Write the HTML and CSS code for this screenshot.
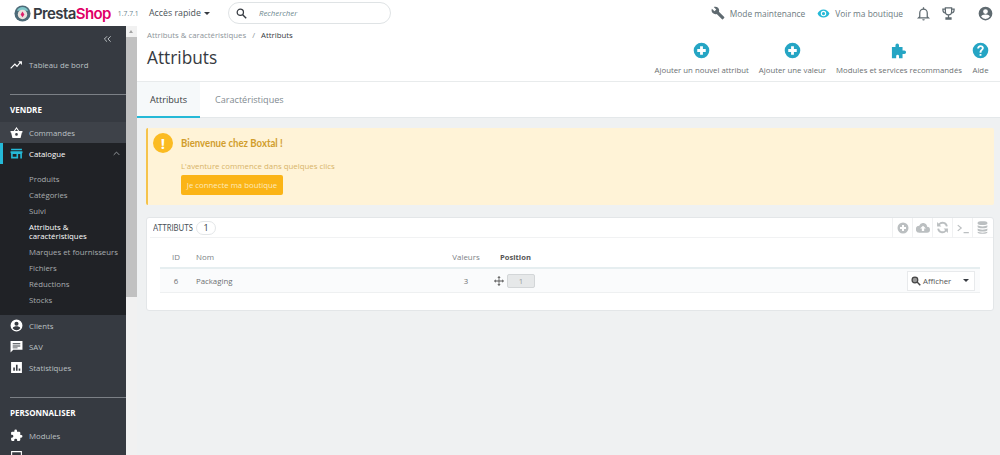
FILE: index.html
```html
<!DOCTYPE html>
<html lang="fr">
<head>
<meta charset="utf-8">
<title>Attributs</title>
<link rel="stylesheet" href="styles.css">
</head>
<body>
<header class="topbar">
  <div class="logo">
    <svg class="logo-mark" viewBox="0 0 18 18" width="17" height="17"><circle cx="9" cy="9" r="8.500" fill="#4d6a78"/><path d="M3 6a6.500 6.500 0 0 1 12 0z" fill="#7fc6c9"/><circle cx="9" cy="10" r="5" fill="#e9e2dc"/><path d="M9 7l2 3-2 3-2-3z" fill="#df1f6c"/></svg>
    <span class="logo-text"><span class="presta">Presta</span><span class="shop">Shop</span></span>
    <span class="version">1.7.7.1</span>
  </div>
  <div class="quick">Accès rapide <i class="caret"></i></div>
  <div class="search">
    <svg viewBox="0 0 14 14" width="11" height="11"><circle cx="5.500" cy="5.500" r="4" fill="none" stroke="#363a41" stroke-width="1.600"/><path d="M8.500 8.500L13 13" stroke="#363a41" stroke-width="1.800"/></svg>
    <span>Rechercher</span>
  </div>
  <div class="top-right">
    <a class="top-link maint">
      <svg viewBox="0 0 24 24" width="14" height="14"><path fill="#5f6a70" d="M22.700 19l-9.100-9.100c.9-2.300.4-5-1.500-6.900-2-2-5-2.400-7.400-1.300L9 6 6 9 1.600 4.700C.4 7.100.9 10.100 2.900 12.100c1.900 1.900 4.600 2.400 6.900 1.500l9.100 9.100c.4.400 1 .4 1.400 0l2.300-2.300c.5-.4.500-1.100.1-1.400z"/></svg>
      Mode maintenance
    </a>
    <a class="top-link shopview">
      <svg viewBox="0 0 24 24" width="13" height="13"><path fill="#25b9d7" d="M12 4.500C7 4.500 2.700 7.600 1 12c1.700 4.400 6 7.500 11 7.500s9.300-3.100 11-7.500c-1.700-4.400-6-7.500-11-7.500zM12 17a5 5 0 1 1 0-10 5 5 0 0 1 0 10zm0-8a3 3 0 1 0 0 6 3 3 0 0 0 0-6z"/></svg>
      Voir ma boutique
    </a>
    <svg class="top-icon" viewBox="0 0 24 24" width="15" height="15"><path fill="none" stroke="#5f6a70" stroke-width="2" d="M6 17V11a6 6 0 0 1 12 0v6l2 2H4z"/><path fill="#5f6a70" d="M10 21h4a2 2 0 0 1-4 0zM11 2h2v3h-2z"/></svg>
    <svg class="top-icon trophy" viewBox="0 0 24 24" width="15" height="15"><path fill="none" stroke="#5f6a70" stroke-width="2" d="M7 3h10v6a5 5 0 0 1-10 0zM7 5H3c0 4 1.500 6 4 6M17 5h4c0 4-1.500 6-4 6M12 14v4M8 21v-2h8v2z"/></svg>
    <svg class="top-icon account" viewBox="0 0 24 24" width="15" height="15"><path fill="#5f6a70" d="M12 1a11 11 0 1 0 0 22 11 11 0 0 0 0-22zm0 4a3.800 3.800 0 1 1 0 7.600A3.800 3.800 0 0 1 12 5zm0 15.600a8.500 8.500 0 0 1-7-3.700c0-2.300 4.700-3.500 7-3.500s7 1.200 7 3.500a8.500 8.500 0 0 1-7 3.700z"/></svg>
  </div>
</header>
<div class="main">
  <aside class="sidebar">
    <div class="collapse">
      <svg viewBox="0 0 10 8" width="9" height="8"><path d="M4.500 1L1.500 4l3 3M8.500 1l-3 3 3 3" fill="none" stroke="#bcc1c4" stroke-width="1.100"/></svg>
    </div>
    <a class="nav-item dash">
      <svg viewBox="0 0 24 24" width="13" height="13"><path fill="#fff" d="M2 18l7-7 4 4 6-7 3 3V4h-7l2.500 2.500L13 12l-4-4-8.500 8.500z"/></svg>
      <span>Tableau de bord</span>
    </a>
    <div class="section first">VENDRE</div>
    <a class="nav-item hover">
      <svg viewBox="0 0 24 24" width="13" height="13"><path fill="#fff" d="M12 2L7 9H1v3h1l2.500 10h15L22 12h1V9h-6zm0 3l2.800 4H9.200zm0 8a2.500 2.500 0 1 1 0 5 2.500 2.500 0 0 1 0-5z"/></svg>
      <span>Commandes</span>
    </a>
    <div class="group">
      <a class="nav-item current">
        <svg viewBox="0 0 24 24" width="13" height="13"><path fill="#25b9d7" d="M2 3h20v3H2zM1 8h22v3l-1 1v9H2v-9l-1-1zm4 5v5h7v-5zm10 0v8h4v-8z"/></svg>
        <span>Catalogue</span>
        <svg class="chev" viewBox="0 0 10 6" width="7" height="5"><path d="M1 5l4-4 4 4" fill="none" stroke="#9ea3a7" stroke-width="1.300"/></svg>
      </a>
      <ul class="submenu">
        <li>Produits</li>
        <li>Catégories</li>
        <li>Suivi</li>
        <li class="active">Attributs &amp; caractéristiques</li>
        <li class="nowrap">Marques et fournisseurs</li>
        <li>Fichiers</li>
        <li>Réductions</li>
        <li>Stocks</li>
      </ul>
    </div>
    <a class="nav-item">
      <svg viewBox="0 0 24 24" width="13" height="13"><path fill="#fff" d="M12 1a11 11 0 1 0 0 22 11 11 0 0 0 0-22zm0 4a3.800 3.800 0 1 1 0 7.600A3.800 3.800 0 0 1 12 5zm0 15.600a8.500 8.500 0 0 1-7-3.700c0-2.300 4.700-3.500 7-3.500s7 1.200 7 3.500a8.500 8.500 0 0 1-7 3.700z"/></svg>
      <span>Clients</span>
    </a>
    <a class="nav-item">
      <svg viewBox="0 0 24 24" width="13" height="13"><path fill="#fff" d="M1 2h22v16H6l-5 5zm4 4v2h14V6zm0 4v2h14v-2zm0 4v1h9v-1z"/></svg>
      <span>SAV</span>
    </a>
    <a class="nav-item">
      <svg viewBox="0 0 24 24" width="13" height="13"><path fill="#fff" fill-rule="evenodd" d="M2 2h20v20H2zM6 12v6h3v-6zm5-5v11h3V7zm5 7v4h3v-4z"/></svg>
      <span>Statistiques</span>
    </a>
    <div class="section">PERSONNALISER</div>
    <a class="nav-item">
      <svg viewBox="0 0 24 24" width="13" height="13"><path fill="#fff" d="M20.500 11H19V7a2 2 0 0 0-2-2h-4V3.500a2.500 2.500 0 0 0-5 0V5H4a2 2 0 0 0-2 2v3.800h1.500a2.700 2.700 0 0 1 0 5.400H2V20a2 2 0 0 0 2 2h3.800v-1.500a2.700 2.700 0 0 1 5.400 0V22H17a2 2 0 0 0 2-2v-4h1.500a2.500 2.500 0 0 0 0-5z"/></svg>
      <span>Modules</span>
    </a>
    <a class="nav-item">
      <svg viewBox="0 0 24 24" width="13" height="13"><path fill="none" stroke="#fff" stroke-width="2" d="M3 3h18v14H3zM8 21h8"/></svg>
      <span>Apparence</span>
    </a>
  </aside>
  <div class="scrollbar">
    <span class="scroll-up"></span>
    <span class="scroll-thumb"></span>
  </div>
  <div class="content">
    <section class="page-head">
      <div class="head-left">
        <nav class="crumb"><span>Attributs &amp; caractéristiques</span><span class="sep">/</span><b>Attributs</b></nav>
        <h1>Attributs</h1>
      </div>
      <div class="actions">
        <a class="action"><svg viewBox="0 0 24 24" width="17" height="17"><path fill="#25a5c4" fill-rule="evenodd" d="M12 1a11 11 0 1 0 0 22 11 11 0 0 0 0-22zm-2 5h4v4h4v4h-4v4h-4v-4H6v-4h4z"/></svg>Ajouter un nouvel attribut</a>
        <a class="action"><svg viewBox="0 0 24 24" width="17" height="17"><path fill="#25a5c4" fill-rule="evenodd" d="M12 1a11 11 0 1 0 0 22 11 11 0 0 0 0-22zm-2 5h4v4h4v4h-4v4h-4v-4H6v-4h4z"/></svg>Ajouter une valeur</a>
        <a class="action"><svg viewBox="0 0 22 24" width="18" height="17"><path fill="#25a5c4" d="M1 7h5V4.500a2.500 2.500 0 0 1 5 0V7h5v5h2.500a2.500 2.500 0 0 1 0 5H16v6h-5v-3a2 2 0 0 0-4 0v3H1z"/></svg>Modules et services recommandés</a>
        <a class="action"><svg viewBox="0 0 24 24" width="17" height="17"><path fill="#25a5c4" fill-rule="evenodd" d="M12 1a11 11 0 1 0 0 22 11 11 0 0 0 0-22zm-1.300 16h2.600v2.500h-2.600zM12 4.500c2.700 0 4.700 1.700 4.700 4 0 3-3.400 3.200-3.400 6.500h-2.600c0-4.200 3.300-4.300 3.300-6.500 0-.9-.9-1.600-2-1.600S10 8 10 9H7.300c0-2.700 2-4.500 4.700-4.500z"/></svg>Aide</a>
      </div>
    </section>
    <nav class="tabs">
      <a class="tab on">Attributs</a>
      <a class="tab">Caractéristiques</a>
    </nav>
    <div class="body">
      <div class="alert">
        <span class="alert-icon">!</span>
        <div class="alert-text">
          <h4>Bienvenue chez Boxtal !</h4>
          <p>L'aventure commence dans quelques clics</p>
          <a class="btn">Je connecte ma boutique</a>
        </div>
      </div>
      <div class="panel">
        <div class="panel-head">
          <span class="panel-title">ATTRIBUTS</span>
          <span class="badge">1</span>
          <div class="tools">
            <span class="tool"><svg viewBox="0 0 24 24" width="12" height="12"><path fill="#bbbfc1" fill-rule="evenodd" d="M12 1a11 11 0 1 0 0 22 11 11 0 0 0 0-22zm-2 5h4v4h4v4h-4v4h-4v-4H6v-4h4z"/></svg></span>
            <span class="tool"><svg viewBox="0 0 24 24" width="14" height="14"><path fill="#bbbfc1" d="M19 10a7 7 0 0 0-13.500-2A6 6 0 0 0 6 20h13a5 5 0 0 0 0-10zm-5 3v4h-4v-4H7l5-5 5 5z"/></svg></span>
            <span class="tool"><svg viewBox="0 0 24 24" width="13" height="13"><path fill="none" stroke="#bbbfc1" stroke-width="3.500" d="M20 10a8 8 0 0 0-14-4L4 8M4 14a8 8 0 0 0 14 4l2-2"/><path fill="#bbbfc1" d="M2 2v8h8zM22 22v-8h-8z"/></svg></span>
            <span class="tool"><svg viewBox="0 0 24 24" width="14" height="14"><path fill="none" stroke="#bbbfc1" stroke-width="2" d="M3 7l6 5-6 5M13 20h9"/></svg></span>
            <span class="tool"><svg viewBox="0 0 24 24" width="13" height="13"><path fill="#bbbfc1" d="M3 3c0-1.500 4-2.500 9-2.500S21 1.500 21 3v2c0 1.500-4 2.500-9 2.500S3 6.500 3 5zM3 8c2 1.500 5 2 9 2s7-.5 9-2v3c0 1.500-4 2.500-9 2.500S3 12.500 3 11zM3 14c2 1.500 5 2 9 2s7-.5 9-2v3c0 1.500-4 2.500-9 2.500S3 18.500 3 17zM3 20c2 1 5 1.500 9 1.500s7-.5 9-1.500v1c0 1.500-4 2.500-9 2.500S3 22.500 3 21z"/></svg></span>
          </div>
        </div>
        <div class="table">
          <div class="row head">
            <span class="c-id">ID</span>
            <span class="c-name">Nom</span>
            <span class="c-val">Valeurs</span>
            <span class="c-pos"><b>Position</b></span>
          </div>
          <div class="row data">
            <span class="c-id">6</span>
            <span class="c-name">Packaging</span>
            <span class="c-val">3</span>
            <span class="c-pos">
              <svg viewBox="0 0 24 24" width="10" height="10"><path fill="#555" d="M12 0l4 4h-3v7h7V8l4 4-4 4v-3h-7v7h3l-4 4-4-4h3v-7H4v3l-4-4 4-4v3h7V4H8z"/></svg>
              <span class="pos-box">1</span>
            </span>
            <span class="c-act">
              <a class="view">
                <svg viewBox="0 0 14 14" width="10" height="10"><circle cx="5.500" cy="5.500" r="4" fill="#999" stroke="#444" stroke-width="1.700"/><path d="M8.500 8.500L13 13" stroke="#444" stroke-width="2"/></svg>
                Afficher
                <i class="caret"></i>
              </a>
            </span>
          </div>
        </div>
      </div>
    </div>
  </div>
</div>
</body>
</html>
```

FILE: styles.css
```css
* { box-sizing: border-box; }
html, body { margin: 0; height: 455px; overflow: hidden; }
body { font-family: "Open Sans", sans-serif; font-size: 9px; color: #6c6f72; background: #fff; display: flex; flex-direction: column; }
a { color: inherit; text-decoration: none; }

.topbar { height: 26px; flex: none; display: flex; align-items: center; background: #fff; padding-left: 14px; }
.logo { display: flex; align-items: center; width: 135px; flex: none; }
.logo-mark { flex: none; }
.logo-text { font-family: "Inter", "Open Sans", sans-serif; font-size: 15px; font-weight: 600; letter-spacing: -.6px; margin-left: 2px; }
.presta { color: #363a41; }
.shop { color: #df0067; }
.version { font-size: 6.800px; color: #6c868e; margin-left: 7px; }
.quick { font-size: 8.800px; color: #4a5258; width: 79px; flex: none; display: flex; align-items: center; gap: 3px; }
.caret { display: inline-block; width: 0; height: 0; border-left: 3px solid transparent; border-right: 3px solid transparent; border-top: 3px solid #363a41; }
.search { width: 163px; height: 22px; border: 1px solid #dfe3e5; border-radius: 11px; display: flex; align-items: center; padding-left: 7px; gap: 12px; flex: none; }
.search span { font-style: italic; font-size: 7.800px; color: #6c868e; }
.top-right { margin-left: auto; display: flex; align-items: center; color: #6c7a80; font-size: 8.400px; }
.top-link { display: flex; align-items: center; }
.maint { gap: 5px; margin-right: 12px; }
.shopview { gap: 5px; margin-right: 13px; }
.top-icon { margin-right: 10px; }
.top-icon.trophy { margin-right: 22px; }
.top-icon.account { margin-right: 7px; }

.main { flex: 1; display: flex; min-height: 0; }
.sidebar { width: 126px; flex: none; background: #363a41; color: #bcc1c4; overflow: hidden; font-size: 7.800px; }
.collapse { height: 26px; display: flex; justify-content: flex-end; align-items: flex-start; padding: 9px 14px 0 0; }
.nav-item { height: 21px; display: flex; align-items: center; padding-left: 10px; position: relative; }
.nav-item > svg:first-child { flex: none; margin-right: 6px; }
.nav-item.dash { height: 26px; }
.nav-item.hover { background: #3e4249; }
.nav-item.current { color: #fff; background: #202226; }
.nav-item.current::before { content: ""; position: absolute; left: 0; top: 0; bottom: 0; width: 3px; background: #25b9d7; }
.chev { margin-left: auto; margin-right: 6px; }
.group { background: #202226; }
.submenu { list-style: none; margin: 0; padding: 7px 0 7px 29px; }
.submenu li { line-height: 9px; padding: 3.500px 0; color: #a9adb0; }
.submenu li.active { color: #fff; }
.submenu li.nowrap { white-space: nowrap; }
.section { margin: 19px 0 0 10px; padding-top: 9px; border-top: 1px solid #7c8086; color: #fff; font-weight: 700; font-size: 8px; line-height: 11px; height: 28px; }
.section.first { margin-top: 16px; }

.scrollbar { width: 11px; flex: none; background: #f1f1f1; display: flex; flex-direction: column; }
.scroll-up { height: 11px; flex: none; position: relative; }
.scroll-up::after { content: ""; position: absolute; left: 3px; top: 4px; border-left: 2.500px solid transparent; border-right: 2.500px solid transparent; border-bottom: 3px solid #a3a3a3; }
.scroll-thumb { height: 260px; flex: none; background: #c1c1c1; }

.content { flex: 1; min-width: 0; display: flex; flex-direction: column; }
.page-head { height: 56px; flex: none; display: flex; justify-content: space-between; background: #fff; border-bottom: 1px solid #e8ebec; padding-left: 10px; }
.crumb { font-size: 7.800px; color: #8c9499; padding-top: 4px; line-height: 11px; }
.crumb b { font-weight: 400; color: #363a41; }
.sep { margin: 0 6px; }
h1 { margin: 4px 0 0; font-size: 17.300px; font-weight: 400; color: #363a41; line-height: 26px; }
.actions { display: flex; padding: 16px 0 0; align-items: flex-start; margin-right: 11px; }
.action { display: flex; flex-direction: column; align-items: center; font-size: 7.800px; color: #6c6f72; margin-left: 10px; line-height: 11px; gap: 6px; white-space: nowrap; }

.tabs { height: 36px; flex: none; display: flex; background: #fff; border-bottom: 1px solid #e4e8ea; }
.tab { display: flex; align-items: center; padding: 0 13px; font-size: 9.100px; color: #7f8a90; margin-right: 2px; }
.tab.on { color: #363a41; background: #f6f9fa; border-bottom: 2px solid #25b9d7; height: 36px; margin-right: 2px; }

.body { flex: 1; background: #eff1f2; padding: 10px 6px 0 9px; min-height: 0; }
.alert { height: 77px; background: #fff3d7; border-left: 2px solid #f5c34b; display: flex; padding: 5px 0 0 5px; border-radius: 2px; }
.alert-icon { width: 20px; height: 20px; border-radius: 50%; background: #fbbb22; color: #fff; font-weight: 700; font-size: 15px; display: flex; align-items: center; justify-content: center; flex: none; }
.alert-text { margin-left: 8px; }
.alert-text h4 { margin: 3px 0 0; font-family: "Lato", sans-serif; font-size: 12px; font-weight: 700; color: #d19d2c; line-height: 14px; transform: scaleX(.8); transform-origin: left; white-space: nowrap; }
.alert-text p { margin: 11px 0 0; font-size: 7.850px; color: #d8b469; line-height: 11px; }
.btn { display: inline-block; margin-top: 3px; height: 20px; line-height: 20px; width: 102px; text-align: center; background: #fbb416; color: #fde9bd; font-size: 7.800px; border-radius: 2px; }
.panel { margin-top: 12px; height: 94px; background: #fff; border: 1px solid #e3e6e8; border-radius: 3px; }
.panel-head { height: 20px; display: flex; align-items: center; border-bottom: 1px solid #f1f2f3; margin: 0 0 0 3px; padding-left: 3px; }
.panel-title { font-family: "Lato", sans-serif; font-size: 9px; color: #4a5258; transform: scaleX(.85); transform-origin: left; width: 39px; margin-bottom: 1px; }
.badge { margin-left: 4px; width: 20px; height: 14px; border: 1px solid #e3e6e8; border-radius: 7px; font-size: 9px; color: #363a41; text-align: center; line-height: 12px; }
.tools { margin-left: auto; display: flex; height: 20px; padding-right: 1px; }
.tool { width: 20px; display: flex; align-items: center; justify-content: center; border-left: 1px solid #f0f1f2; }
.table { margin: 0 13px 0 13px; }
.row { display: flex; align-items: center; }
.row.head { height: 31px; font-size: 7.900px; border-bottom: 2px solid #e6eef0; color: #7b8185; padding-top: 9px; }
.row.data { height: 24px; background: #fafbfc; border-bottom: 1px solid #eef0f1; font-size: 7.800px; color: #6c6f72; padding-right: 5px; }
.c-id { width: 36px; padding-right: 4px; text-align: center; flex: none; }
.c-name { width: 251px; flex: none; }
.c-val { width: 38px; flex: none; text-align: center; }
.c-pos { width: 100px; padding-left: 15px; flex: none; display: flex; align-items: center; gap: 3px; }
.row.data .c-pos { padding-left: 9px; }
.c-pos b { font-weight: 700; color: #555; font-size: 7.600px; }
.pos-box { width: 28px; height: 14px; background: #e6e8e9; border: 1px solid #d3d6d8; border-radius: 2px; color: #999; text-align: center; line-height: 12px; }
.c-act { margin-left: auto; }
.view { display: flex; align-items: center; gap: 2px; width: 68px; height: 20px; background: #fff; border: 1px solid #e8eaec; padding-left: 3px; color: #555; }
.view .caret { margin-left: auto; margin-right: 5px; border-left-width: 3.500px; border-right-width: 3.500px; border-top-width: 3.500px; }
```
